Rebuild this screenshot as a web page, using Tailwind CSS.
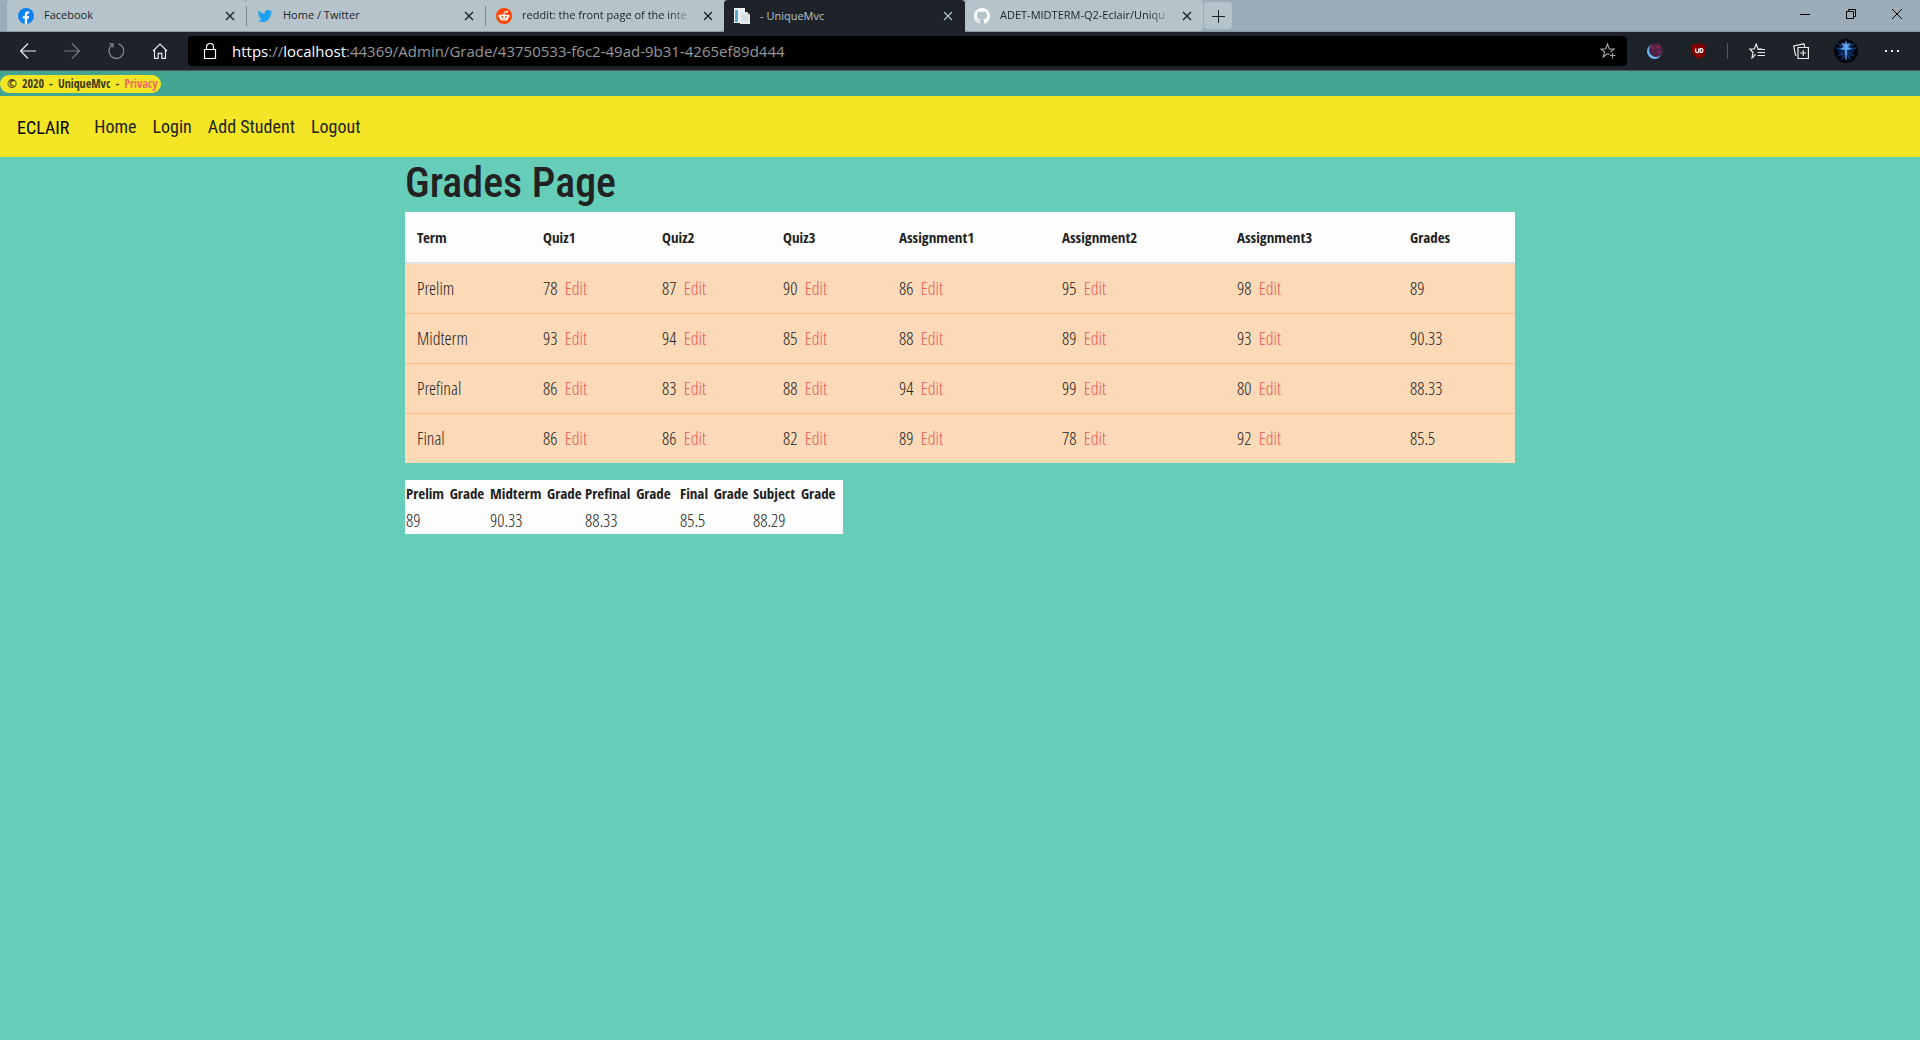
<!DOCTYPE html>
<html lang="en">
<head>
<meta charset="utf-8">
<title>- UniqueMvc</title>
<script src="https://cdn.jsdelivr.net/npm/@tailwindcss/browser@4"></script>
</head>
<body class="min-h-screen bg-[#66cdb8] font-['Open_Sans_Condensed_Light','Open_Sans_Condensed','Roboto_Condensed',sans-serif] text-[#222222]">

<div class="font-['Open_Sans','Noto_Sans',sans-serif]">
  <!-- Tab strip -->
  <div class="flex h-8 border-b border-[#8799a5] bg-[#9cadb9] pl-[7px] text-[11px] text-[#20262c]">
    <div class="flex w-[239px] items-center rounded-t bg-[#b5c4cb] pl-[11px] pr-[10px]">
      <svg class="size-4 shrink-0" viewBox="0 0 16 16"><circle cx="8" cy="8" r="8" fill="#0c82f2"/><path d="M6.800 16v-5.500H4.800V8.200h2V6.500c0-2 1.200-3.100 3-3.100.7 0 1.400.1 1.400.1v1.900h-.9c-.9 0-1.200.6-1.200 1.200v1.600h2.100l-.4 2.300H9.100V16z" fill="#fff"/></svg>
      <span class="ml-[10px] min-w-0 flex-1 whitespace-nowrap">Facebook</span>
      <button aria-label="Close tab" class="ml-2"><svg class="size-3" viewBox="0 0 12 12" fill="none" stroke="#1b2228" stroke-width="1.400"><path d="M2 2l8 8M10 2l-8 8"/></svg></button>
    </div>
    <div class="flex w-[239px] items-center bg-[#b5c4cb] pr-[10px]">
      <span class="h-5 w-px bg-[#7a8790]"></span>
      <svg class="ml-[10px] size-4 shrink-0" viewBox="-1 -1 26 26" fill="#1da1f2"><path d="M23.950 4.570a10 10 0 01-2.820.775 4.958 4.958 0 002.163-2.723c-.951.555-2.005.959-3.127 1.184a4.920 4.920 0 00-8.384 4.482C7.690 8.095 4.067 6.130 1.640 3.162a4.822 4.822 0 00-.666 2.475c0 1.710.870 3.213 2.188 4.096a4.904 4.904 0 01-2.228-.616v.06a4.923 4.923 0 003.946 4.827 4.996 4.996 0 01-2.212.085 4.936 4.936 0 004.604 3.417 9.867 9.867 0 01-6.102 2.105c-.390 0-.779-.023-1.170-.067a13.995 13.995 0 007.557 2.209c9.053 0 13.998-7.496 13.998-13.985 0-.210 0-.420-.015-.630A9.935 9.935 0 0024 4.590z"/></svg>
      <span class="ml-[10px] min-w-0 flex-1 whitespace-nowrap">Home / Twitter</span>
      <button aria-label="Close tab" class="ml-2"><svg class="size-3" viewBox="0 0 12 12" fill="none" stroke="#1b2228" stroke-width="1.400"><path d="M2 2l8 8M10 2l-8 8"/></svg></button>
    </div>
    <div class="flex w-[239px] items-center rounded-br bg-[#b5c4cb] pr-[10px]">
      <span class="h-5 w-px bg-[#7a8790]"></span>
      <svg class="ml-[10px] size-4 shrink-0" viewBox="0 0 16 16"><circle cx="8" cy="8" r="8" fill="#ff4500"/><ellipse cx="8" cy="9.500" rx="4.500" ry="3.300" fill="#fff"/><circle cx="3.600" cy="8" r="1.200" fill="#fff"/><circle cx="12.400" cy="8" r="1.200" fill="#fff"/><circle cx="11" cy="3.800" r="1" fill="#fff"/><path d="M8 6.500l.7-3 2.300.4" stroke="#fff" stroke-width=".8" fill="none"/><circle cx="6.200" cy="9" r=".9" fill="#ff4500"/><circle cx="9.800" cy="9" r=".9" fill="#ff4500"/><path d="M6.200 11q1.800 1.200 3.600 0" stroke="#ff4500" stroke-width=".6" fill="none"/></svg>
      <span class="ml-[10px] min-w-0 flex-1 whitespace-nowrap mask-r-from-85%">reddit: the front page of the inte</span>
      <button aria-label="Close tab" class="ml-2"><svg class="size-3" viewBox="0 0 12 12" fill="none" stroke="#1b2228" stroke-width="1.400"><path d="M2 2l8 8M10 2l-8 8"/></svg></button>
    </div>
    <div class="-mb-px flex w-[241px] items-center rounded-t bg-[#1e2229] pl-[10px] pr-[11px] text-[#b5c4cb]">
      <svg class="size-4 shrink-0" viewBox="0 0 16 16"><path d="M0 0h11v15H0z" fill="#eef3f6"/><path d="M1 2h3v12H1z" fill="#58a9d8"/><path d="M6 4h7l3 3v9H6z" fill="#e4e9ec"/><path d="M8 8h5M8 10h6M8 12h6" stroke="#c6cfd5"/><path d="M13 4v3h3" fill="#cbd2d7"/></svg>
      <span class="ml-[10px] min-w-0 flex-1 whitespace-nowrap">- UniqueMvc</span>
      <button aria-label="Close tab" class="ml-2"><svg class="size-3" viewBox="0 0 12 12" fill="none" stroke="#b5c4cb" stroke-width="1.200"><path d="M2 2l8 8M10 2l-8 8"/></svg></button>
    </div>
    <div class="flex w-[238px] items-center rounded-t rounded-b bg-[#b5c4cb] pl-[9px] pr-[10px]">
      <svg class="size-4 shrink-0" viewBox="0 0 16 16" fill="#fff"><path fill-rule="evenodd" d="M8 0C3.580 0 0 3.580 0 8c0 3.540 2.290 6.530 5.470 7.590.4.070.55-.17.55-.38 0-.19-.01-.82-.01-1.490-2.010.37-2.530-.49-2.690-.94-.09-.23-.48-.94-.82-1.130-.28-.15-.68-.52-.01-.53.63-.01 1.080.58 1.230.82.72 1.210 1.870.87 2.330.66.07-.52.28-.87.51-1.070-1.780-.2-3.640-.89-3.640-3.950 0-.87.31-1.590.82-2.150-.08-.2-.36-1.020.08-2.120 0 0 .67-.21 2.200.82.64-.18 1.320-.27 2-.27s1.360.09 2 .27c1.530-1.040 2.200-.82 2.200-.82.44 1.100.16 1.920.08 2.120.51.56.82 1.270.82 2.150 0 3.070-1.870 3.750-3.650 3.950.29.25.54.73.54 1.480 0 1.070-.01 1.930-.01 2.200 0 .21.15.46.55.38A8.010 8.010 0 0016 8c0-4.420-3.580-8-8-8z"/></svg>
      <span class="ml-[10px] min-w-0 flex-1 whitespace-nowrap mask-r-from-85%">ADET-MIDTERM-Q2-Eclair/Uniqu</span>
      <button aria-label="Close tab" class="ml-2"><svg class="size-3" viewBox="0 0 12 12" fill="none" stroke="#1b2228" stroke-width="1.400"><path d="M2 2l8 8M10 2l-8 8"/></svg></button>
    </div>
    <button aria-label="New tab" class="my-[2px] ml-px flex w-7 items-center justify-center rounded-sm bg-[#b5c4cb]"><svg class="size-[14px]" viewBox="0 0 14 14" stroke="#1b2228" fill="none"><path d="M7.500 1v13M1 7.500h13"/></svg></button>
    <div class="ml-auto flex h-7 text-black">
      <button aria-label="Minimize" class="flex w-[46px] items-center justify-center"><svg class="size-[10px]" viewBox="0 0 10 10" stroke="currentColor"><path d="M0 5.500h10"/></svg></button>
      <button aria-label="Restore" class="flex w-[46px] items-center justify-center"><svg class="size-[10px]" viewBox="0 0 10 10" stroke="currentColor" fill="none"><path d="M.5 2.500h7v7h-7zM2.500 2.500v-2h7v7h-2"/></svg></button>
      <button aria-label="Close" class="flex w-[46px] items-center justify-center"><svg class="size-[10px]" viewBox="0 0 10 10" stroke="currentColor"><path d="M0 0l10 10M10 0L0 10"/></svg></button>
    </div>
  </div>

  <!-- Toolbar -->
  <div class="flex h-[39px] items-center border-b border-[#55575b] bg-[#1e2229] text-[#e8eaec]">
    <div class="flex w-[188px] gap-7 pl-5">
      <button aria-label="Back"><svg class="size-4" viewBox="0 0 16 16" fill="none" stroke="currentColor" stroke-width="1.200"><path d="M16 8H1M8 .5L.7 8 8 15.500"/></svg></button>
      <button aria-label="Forward" class="text-[#74777c]"><svg class="size-4" viewBox="0 0 16 16" fill="none" stroke="currentColor" stroke-width="1.200"><path d="M0 8h15M8 .5L15.300 8 8 15.500"/></svg></button>
      <button aria-label="Refresh" class="text-[#8a8d91]"><svg class="size-4" viewBox="0 0 16 16" fill="none" stroke="currentColor" stroke-width="1.200"><path d="M10.500 .9A7.400 7.400 0 1 1 4.200 1.900M1.500 .8h3.500v3.700"/></svg></button>
      <button aria-label="Home"><svg class="size-4" viewBox="0 0 16 16" fill="none" stroke="currentColor" stroke-width="1.200"><path d="M1 8l7-7 7 7M2.500 7v8.400h3.700v-5h3.600v5h3.700V7"/></svg></button>
    </div>
    <div class="flex h-[30px] flex-1 items-center rounded bg-black pl-[15px] pr-[11px]">
      <svg class="h-4 w-[14px]" viewBox="0 0 14 16" fill="none" stroke="#fff" stroke-width="1.200"><path d="M1.500 6.500h11v9h-11zM3.500 6V4a3.500 3.500 0 0 1 7 0v2"/></svg>
      <div class="ml-[15px] flex-1 text-[15px] text-[#96989a]"><span class="text-white">https</span>://<span class="text-white">localhost</span>:44369/Admin/Grade/43750533-f6c2-49ad-9b31-4265ef89d444</div>
      <button aria-label="Add to favorites"><svg class="size-4" viewBox="0 0 16 16" fill="none" stroke="#a5a7a9" stroke-width="1.100"><path d="M9.500 11.800l-2-1.200L3.300 14l1.400-5L1 6h4.700L7.500 1l1.800 5H14l-3.500 2.800M12.500 10v5.500M10 12.500h5.500"/></svg></button>
    </div>
    <div class="flex w-[293px] items-center pl-5">
      <button aria-label="Extension"><svg class="size-4" viewBox="0 0 16 16"><circle cx="7.500" cy="8.500" r="7.500" fill="#69b9f0"/><circle cx="9" cy="7" r="7" fill="#4d2445"/><circle cx="6" cy="5" r="1.500" fill="#8a2450"/><circle cx="11" cy="4" r="1.300" fill="#a52855"/><circle cx="12" cy="9" r="1.200" fill="#912b55"/></svg></button>
      <button aria-label="Ad blocker" class="ml-7"><svg class="size-4" viewBox="0 0 16 16"><path d="M8 0c2 1.200 4.500 1.500 7 1.500V9c0 3.200-4 5.500-7 7-3-1.500-7-3.800-7-7V1.500C3.500 1.500 6 1.200 8 0z" fill="#800000"/><path d="M4.700 5.500v2.700q0 1.400 1.500 1.400t1.500-1.400V5.500M9.200 5.500v4h.8q1.800 0 1.800-2t-1.800-2z" fill="none" stroke="#fff" stroke-width="1.200"/></svg></button>
      <span class="ml-[20px] h-4 w-px bg-[#55595e]"></span>
      <button aria-label="Favorites" class="ml-[21px]"><svg class="size-4" viewBox="0 0 16 16" fill="none" stroke="currentColor" stroke-width="1.200"><path d="M6.500 11.500L3 15l1-5.500L.8 6h4.500L7.200 1l1.900 5h4M8.500 6.500H16M8.500 9.500H16M8.500 12.500H16"/></svg></button>
      <button aria-label="Collections" class="ml-7"><svg class="size-4" viewBox="0 0 16 16" fill="none" stroke="currentColor" stroke-width="1.200"><path d="M5 4.500h10.400v11H5zM10.200 7v6M7.200 10h6M3.500 12.500l-1-.5L.7 3 11 .8l.7 3"/></svg></button>
      <button aria-label="Profile" class="ml-[25px]"><svg class="size-6" viewBox="0 0 24 24"><circle cx="12" cy="12" r="12" fill="#04060d"/><circle cx="12" cy="11" r="8" fill="#0a1f4c"/><path d="M12 10L3 4M12 10l9-6M12 11L2 9M12 11l10-2M12 12L4 17M12 12l8 5M12 12L8 21M12 12l4 9" stroke="#1c4f9c" stroke-width=".9"/><path d="M12 1l1 4 4-1-3 4 4 2-5 1-.5 10h-1L11 11l-5-1 4-2-3-4 4 1z" fill="#5ea0e4"/></svg></button>
      <button aria-label="Settings and more" class="ml-[26px]"><svg class="size-4" viewBox="0 0 16 16" fill="currentColor"><path d="M1 7h2v2H1zM7 7h2v2H7zM13 7h2v2h-2z"/></svg></button>
    </div>
  </div>
</div>

<!-- Footer strip -->
<footer class="flex h-[25px] items-center bg-[#41a592]">
  <div class="flex h-[18px] w-[161px] items-center gap-[5px] rounded-full bg-[#f4e625] pl-[7px] font-['Open_Sans_Condensed',sans-serif] text-xs font-bold text-[#3f3b12]"><span>©</span><span>2020</span><span>-</span><span>UniqueMvc</span><span>-</span><a href="#" class="text-[#f16d62]">Privacy</a></div>
</footer>

<nav class="flex h-[61px] items-center bg-[#f4e625] pl-[17px] font-['Roboto_Condensed',sans-serif] text-lg leading-7">
  <a href="#" class="mr-[25px] pt-[3px] text-black">ECLAIR</a>
  <div class="flex gap-4 pt-px">
    <a href="#">Home</a>
    <a href="#">Login</a>
    <a href="#">Add Student</a>
    <a href="#">Logout</a>
  </div>
</nav>

<main class="mx-auto max-w-[1110px]">
  <h1 class="pb-[3px] font-['Roboto_Condensed',sans-serif] text-[42px] leading-[52px] font-medium">Grades Page</h1>

  <table class="mb-[17px] w-full table-fixed border-separate border-spacing-0 bg-[#fcd9b7] text-left text-lg leading-[25px] [&_a]:ml-1 [&_a]:text-[#e95a5a] [&_td]:px-3 [&_td]:py-3 [&_th]:px-3">
    <colgroup><col class="w-[126px]"><col class="w-[119px]"><col class="w-[121px]"><col class="w-[116px]"><col class="w-[163px]"><col class="w-[175px]"><col class="w-[173px]"><col class="w-[117px]"></colgroup>
    <thead class="bg-[#fdfdfd] font-['Open_Sans_Condensed',sans-serif] text-[15px] [&_th]:h-[52px] [&_th]:border-b-2 [&_th]:border-[#dde0e4]">
      <tr><th>Term</th><th>Quiz1</th><th>Quiz2</th><th>Quiz3</th><th>Assignment1</th><th>Assignment2</th><th>Assignment3</th><th>Grades</th></tr>
    </thead>
    <tbody class="[&_tr+tr_td]:border-t [&_tr+tr_td]:border-[#f9bb78]">
      <tr><td>Prelim</td><td>78 <a href="#">Edit</a></td><td>87 <a href="#">Edit</a></td><td>90 <a href="#">Edit</a></td><td>86 <a href="#">Edit</a></td><td>95 <a href="#">Edit</a></td><td>98 <a href="#">Edit</a></td><td>89</td></tr>
      <tr><td>Midterm</td><td>93 <a href="#">Edit</a></td><td>94 <a href="#">Edit</a></td><td>85 <a href="#">Edit</a></td><td>88 <a href="#">Edit</a></td><td>89 <a href="#">Edit</a></td><td>93 <a href="#">Edit</a></td><td>90.33</td></tr>
      <tr><td>Prefinal</td><td>86 <a href="#">Edit</a></td><td>83 <a href="#">Edit</a></td><td>88 <a href="#">Edit</a></td><td>94 <a href="#">Edit</a></td><td>99 <a href="#">Edit</a></td><td>80 <a href="#">Edit</a></td><td>88.33</td></tr>
      <tr><td>Final</td><td>86 <a href="#">Edit</a></td><td>86 <a href="#">Edit</a></td><td>82 <a href="#">Edit</a></td><td>89 <a href="#">Edit</a></td><td>78 <a href="#">Edit</a></td><td>92 <a href="#">Edit</a></td><td>85.5</td></tr>
    </tbody>
  </table>

  <table class="w-[438px] table-fixed bg-[#fdfdfd] text-left text-lg leading-[27px] [&_span]:ml-[2px] [&_td]:p-0 [&_td]:pl-px [&_th]:whitespace-nowrap [&_th]:p-0 [&_th]:pl-px">
    <colgroup><col class="w-[84px]"><col class="w-[95px]"><col class="w-[95px]"><col class="w-[73px]"><col class="w-[91px]"></colgroup>
    <thead class="font-['Open_Sans_Condensed',sans-serif] text-[15px] leading-[27px]"><tr><th>Prelim <span>Grade</span></th><th>Midterm <span>Grade</span></th><th>Prefinal <span>Grade</span></th><th>Final <span>Grade</span></th><th>Subject <span>Grade</span></th></tr></thead>
    <tbody><tr><td>89</td><td>90.33</td><td>88.33</td><td>85.5</td><td>88.29</td></tr></tbody>
  </table>
</main>
</body>
</html>
